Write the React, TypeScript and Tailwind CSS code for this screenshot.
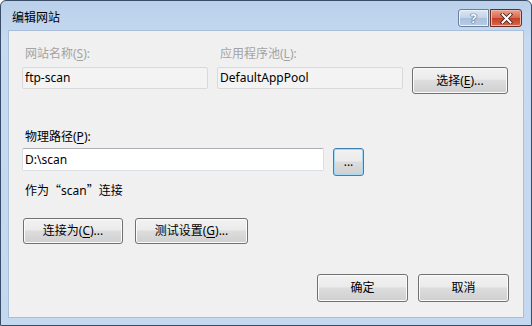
import React from "react";

const font = { fontFamily: '"Noto Sans", "Noto Sans CJK SC", sans-serif' };
const cjk = { fontFamily: '"Noto Sans CJK SC", sans-serif' };

function U({ children }: { children: React.ReactNode }) {
  return <span className="underline underline-offset-2">{children}</span>;
}

const btn =
  "flex items-center justify-center rounded-[3px] border border-[#707070] bg-[linear-gradient(#f2f2f2,#ebebeb_45%,#dddddd_50%,#cfcfcf)] shadow-[inset_0_0_0_1px_#fbfbfb] text-[12px] text-black leading-[16px]";

export default function App() {
  return (
    <div
      className="w-[532px] h-[326px] flex flex-col rounded-t-[6px] border border-[#3a4d66] bg-[linear-gradient(#bad0ea,#c6daf1_40px,#c4d8ef)] overflow-hidden"
      style={font}
    >
      {/* Title bar */}
      <div className="h-[29px] flex items-start shrink-0">
        <div className="pl-[11px] pt-[9px] text-[12px] leading-[16px] text-black">编辑网站</div>
        <div className="ml-auto flex mt-[8px] mr-[9px] gap-[1px]">
          <div className="w-[31px] h-[18px] rounded-l-[3px] border border-[#6c7f9a] bg-[linear-gradient(#d9e6f4,#c3d5ea_50%,#a9c0dd_50%,#b7cde6)] shadow-[inset_0_0_0_1px_#e9f1fa] flex items-center justify-center">
            <span
              className="text-[13px] leading-[14px] font-bold text-white"
              style={{ textShadow: "0 0 1px #3b4e6a, 0 0 1px #3b4e6a, 0 0 1px #3b4e6a" }}
            >
              ?
            </span>
          </div>
          <div className="w-[32px] h-[18px] rounded-r-[3px] border border-[#6b2a24] bg-[linear-gradient(#eba08c,#d9674e_50%,#c43e26_50%,#d8684a)] shadow-[inset_0_0_0_1px_#efb9a9] flex items-center justify-center">
            <svg width="13" height="11" viewBox="0 0 13 11">
              <path d="M2.5 1.5 L10.5 9.5 M10.5 1.5 L2.5 9.5" stroke="#3b1a16" strokeWidth="3.6" strokeLinecap="square" />
              <path d="M2.5 1.5 L10.5 9.5 M10.5 1.5 L2.5 9.5" stroke="#ffffff" strokeWidth="2" strokeLinecap="square" />
            </svg>
          </div>
        </div>
      </div>

      {/* Client area */}
      <div className="mx-[7px] h-[288px] bg-[#f0f0f0] border border-[#a9bed8] flex flex-col text-[12px] leading-[16px] text-black pl-[13px]">
        {/* labels row */}
        <div className="flex mt-[15px] text-[#a3a3a3]">
          <div className="w-[195px] pl-[3px]">
            网站名称(<U>S</U>):
          </div>
          <div className="pl-[3px]">
            应用程序池(<U>L</U>):
          </div>
        </div>
        <div className="flex items-start mt-[5px]">
          <div className="w-[186px] h-[22px] border border-[#d9d9d9] bg-[#f3f3f3] rounded-[2px] pl-[2px] flex items-center">
            ftp-scan
          </div>
          <div className="ml-[9px] w-[186px] h-[22px] border border-[#d9d9d9] bg-[#f3f3f3] rounded-[2px] pl-[2px] flex items-center">
            DefaultAppPool
          </div>
          <div className={btn + " ml-[9px] w-[96px] h-[27px]"}>
            选择(<U>E</U>)...
          </div>
        </div>

        <div className="mt-[35px] pl-[3px]">
          物理路径(<U>P</U>):
        </div>
        <div className="flex items-start mt-[3px]">
          <div className="w-[302px] h-[23px] border border-[#dbdfe6] border-t-[#abadb3] bg-white rounded-[2px] pl-[2px] flex items-center">
            D:\scan
          </div>
          <div className="ml-[9px] w-[31px] h-[28px] rounded-[3px] border border-[#3c7fb1] bg-[linear-gradient(#f2f2f2,#ebebeb_45%,#dddddd_50%,#cfcfcf)] shadow-[inset_0_0_0_1px_#a3d9f5] flex items-center justify-center text-[12px] leading-[12px]">
            ...
          </div>
        </div>
        <div className="mt-[6px] pl-[3px]">
          作为<span style={cjk}>“</span>scan<span style={cjk}>”</span>连接
        </div>

        <div className="flex mt-[19px]">
          <div className={btn + " ml-[1px] w-[100px] h-[26px]"}>
            连接为(<U>C</U>)...
          </div>
          <div className={btn + " ml-[12px] w-[113px] h-[26px]"}>
            测试设置(<U>G</U>)...
          </div>
        </div>

        <div className="flex justify-end mt-[30px] pr-[14px]">
          <div className={btn + " w-[91px] h-[28px]"}>确定</div>
          <div className={btn + " ml-[10px] w-[91px] h-[28px]"}>取消</div>
        </div>
      </div>
    </div>
  );
}
